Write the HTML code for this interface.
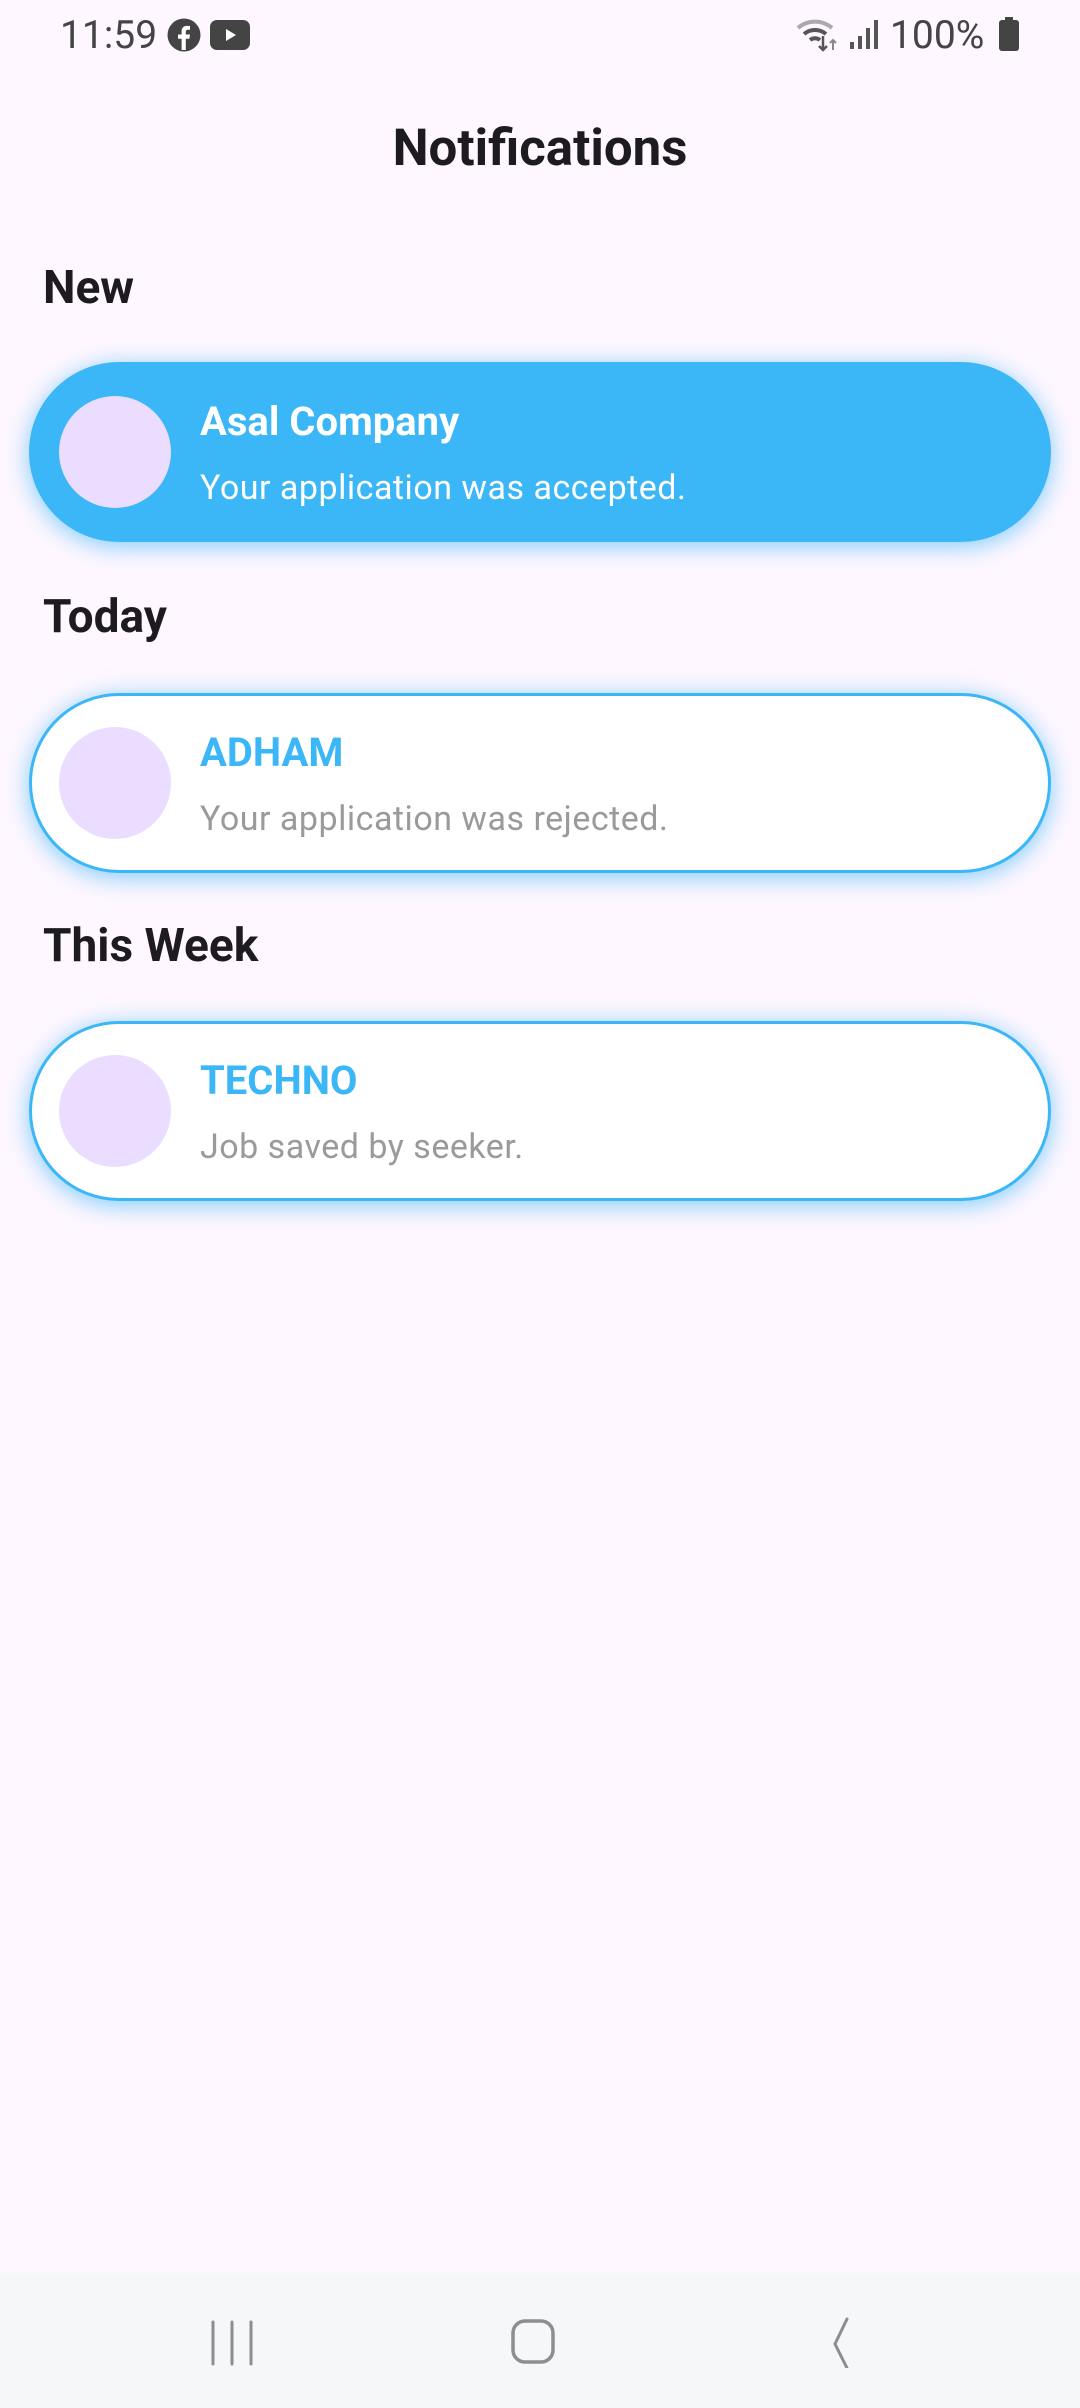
<!DOCTYPE html>
<html><head><meta charset="utf-8"><style>
*{margin:0;padding:0;box-sizing:border-box}
body{width:1080px;height:2408px;background:#FEF7FF;font-family:"Roboto","Liberation Sans",sans-serif;position:relative;overflow:hidden;color:#1d1b20}
.abs{position:absolute}
.sec{position:absolute;left:43px;font-size:46px;font-weight:bold;line-height:1}
.card{position:absolute;left:29px;width:1022px;height:180px;border-radius:90px;box-shadow:0 4px 24px rgba(59,182,247,0.65)}
.card.w{background:#fff;border:3px solid #3BB6F7}
.card.b{background:#3BB6F7}
.av{position:absolute;left:30px;top:34px;width:112px;height:112px;border-radius:50%;background:#EADDFF}
.w .av{left:27px;top:31px}
.t{position:absolute;left:171px;top:40px;font-size:40px;font-weight:bold;line-height:1}
.s{position:absolute;left:171px;top:109px;font-size:34px;line-height:1;letter-spacing:0.5px}
.b .t,.b .s{color:#fff}
.w .t{left:168px;top:37px;color:#3BB6F7}
.w .s{left:168px;top:106px;color:#9a9a9a}
</style></head><body>
<div class="abs" style="left:60px;top:12px;font-size:39px;color:#444">11:59</div>
<svg class="abs" style="left:166px;top:17px" width="36" height="36" viewBox="0 0 24 24"><circle cx="12" cy="12" r="11" fill="#444"/><path d="M13.2 22V14.5h2.4l.4-2.8h-2.8V9.9c0-.8.3-1.4 1.4-1.4H16V6c-.3 0-1.2-.1-2.1-.1-2.1 0-3.5 1.3-3.5 3.6v2.2H8v2.8h2.4V22z" fill="#fff"/></svg>
<svg class="abs" style="left:210px;top:20px" width="40" height="30" viewBox="0 0 40 30"><rect width="40" height="30" rx="7" fill="#444"/><path d="M16 9l10 6-10 6z" fill="#fff"/></svg>
<svg class="abs" style="left:796px;top:16px" width="44" height="36" viewBox="0 0 44 36"><path d="M2 12a26 26 0 0 1 34 0" stroke="#aaa" stroke-width="4" fill="none"/><path d="M8 18a17 17 0 0 1 22 0" stroke="#555" stroke-width="4" fill="none"/><path d="M14 24a8 8 0 0 1 10 0" stroke="#555" stroke-width="4" fill="none"/><path d="M27 20v14M23 30l4 4 4-4" stroke="#555" stroke-width="2.5" fill="none"/><path d="M37 34V24M34 27l3-3 3 3" stroke="#888" stroke-width="2" fill="none"/></svg>
<svg class="abs" style="left:850px;top:18px" width="30" height="32" viewBox="0 0 30 32"><rect x="0" y="24" width="4" height="7" fill="#555"/><rect x="8" y="18" width="4" height="13" fill="#555"/><rect x="16" y="10" width="4" height="21" fill="#555"/><rect x="24" y="2" width="4" height="29" fill="#555"/></svg>
<div class="abs" style="left:890px;top:12px;font-size:39px;color:#444">100%</div>
<svg class="abs" style="left:999px;top:17px" width="20" height="34" viewBox="0 0 20 34"><rect x="6" y="0" width="8" height="4" fill="#444"/><rect x="0" y="3" width="20" height="31" rx="3" fill="#444"/></svg>

<div class="abs" style="left:0;width:1080px;top:123px;text-align:center;font-size:51px;font-weight:bold;line-height:1">Notifications</div>

<div class="sec" style="top:265px">New</div>
<div class="card b" style="top:362px"><div class="av"></div><div class="t">Asal Company</div><div class="s">Your application was accepted.</div></div>

<div class="sec" style="top:594px">Today</div>
<div class="card w" style="top:693px"><div class="av"></div><div class="t">ADHAM</div><div class="s">Your application was rejected.</div></div>

<div class="sec" style="top:923px">This Week</div>
<div class="card w" style="top:1021px"><div class="av"></div><div class="t">TECHNO</div><div class="s">Job saved by seeker.</div></div>

<div class="abs" style="left:0;top:2273px;width:1080px;height:135px;background:#F6F7F8"></div>
<svg class="abs" style="left:200px;top:2318px" width="60" height="50" viewBox="0 0 60 50"><path d="M13 4v42M32 4v42M51 4v42" stroke="#8e8e8e" stroke-width="3" stroke-linecap="round"/></svg>
<svg class="abs" style="left:510px;top:2318px" width="50" height="50" viewBox="0 0 50 50"><rect x="3" y="3" width="40" height="41" rx="12" stroke="#8e8e8e" stroke-width="3.5" fill="none"/></svg>
<svg class="abs" style="left:815px;top:2316px" width="40" height="52" viewBox="0 0 40 52"><path d="M32 3L20 28l12 24" stroke="#8e8e8e" stroke-width="3" fill="none" stroke-linecap="round" stroke-linejoin="miter"/></svg>
</body></html>
